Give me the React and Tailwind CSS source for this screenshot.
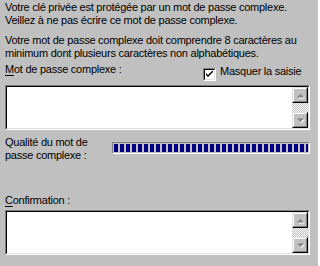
import React from "react";

const field =
  "border border-t-[#808080] border-l-[#808080] border-r-white border-b-white";
const fieldInner =
  "border border-t-black border-l-black border-r-[#dfdfdf] border-b-[#dfdfdf]";
const raisedOuter =
  "border border-t-[#dfdfdf] border-l-[#dfdfdf] border-r-black border-b-black";
const raisedInner =
  "border border-t-white border-l-white border-r-[#808080] border-b-[#808080]";

function Arrow({ dir }) {
  return (
    <svg width="9" height="7" viewBox="0 0 9 7" className="block">
      {dir === "up" ? (
        <>
          <polygon points="4.5,2 1,5.5 8,5.5" fill="#ffffff" transform="translate(1,1)" />
          <polygon points="4.5,2 1,5.5 8,5.5" fill="#808080" />
        </>
      ) : (
        <>
          <polygon points="1,1.5 8,1.5 4.5,5" fill="#ffffff" transform="translate(1,1)" />
          <polygon points="1,1.5 8,1.5 4.5,5" fill="#808080" />
        </>
      )}
    </svg>
  );
}

function ScrollButton({ dir }) {
  return (
    <div className={`w-[16px] h-[16px] bg-[#c0c0c0] ${raisedOuter}`}>
      <div className={`w-full h-full ${raisedInner} flex items-center justify-center`}>
        <Arrow dir={dir} />
      </div>
    </div>
  );
}

function TextArea() {
  return (
    <div className={`w-[305px] h-[45px] ${field}`}>
      <div className={`w-full h-full bg-white ${fieldInner} flex`}>
        <div className="flex-1" />
        <div className="w-[16px] h-full flex flex-col">
          <ScrollButton dir="up" />
          <div className="flex-1 bg-[repeating-conic-gradient(#c0c0c0_0_25%,#ffffff_0_50%)] bg-[length:2px_2px]" />
          <ScrollButton dir="down" />
        </div>
      </div>
    </div>
  );
}

function Checkbox() {
  return (
    <div className={`w-[13px] h-[13px] ${field}`}>
      <div className={`w-full h-full bg-white ${fieldInner} flex items-center justify-center`}>
        <svg width="7" height="7" viewBox="0 0 7 7" className="block">
          <path d="M0 2 L0 4 L2 6 L7 1 L7 -1 L2 4 Z" fill="#000000" />
        </svg>
      </div>
    </div>
  );
}

function Progress() {
  const blocks = Array.from({ length: 33 });
  return (
    <div className={`w-[198px] h-[12px] ${field} p-[1px]`}>
      <div className="w-full h-full flex gap-[2px] overflow-hidden">
        {blocks.map((_, i) => (
          <div key={i} className="w-[4px] h-full shrink-0 bg-[#000080]" />
        ))}
      </div>
    </div>
  );
}

export default function App() {
  return (
    <div
      className="w-[318px] h-[266px] bg-[#c0c0c0] text-black pl-[5px] pt-[1px] text-[11px] leading-[13px] tracking-[-0.25px] overflow-hidden"
      style={{ fontFamily: '"Liberation Sans", Arial, sans-serif' }}
    >
      <p>
        Votre clé privée est protégée par un mot de passe complexe.
        <br />
        Veillez à ne pas écrire ce mot de passe complexe.
      </p>
      <p className="mt-[7px]">
        Votre mot de passe complexe doit comprendre 8 caractères au
        <br />
        minimum dont plusieurs caractères non alphabétiques.
      </p>
      <div className="mt-[3px] h-[22px] flex">
        <div className="w-[198px]">
          <span className="underline underline-offset-[2px]">M</span>ot de passe complexe :
        </div>
        <div className="mt-[5px]">
          <Checkbox />
        </div>
        <div className="ml-[4px] mt-[2px]">Masquer la saisie</div>
      </div>
      <TextArea />
      <div className="mt-[6px] flex">
        <div className="w-[107px]">
          Qualité du mot de
          <br />
          passe complexe :
        </div>
        <div className="mt-[6px]">
          <Progress />
        </div>
      </div>
      <div className="mt-[32px] h-[16px]">
        <span className="underline underline-offset-[2px]">C</span>onfirmation :
      </div>
      <TextArea />
    </div>
  );
}
